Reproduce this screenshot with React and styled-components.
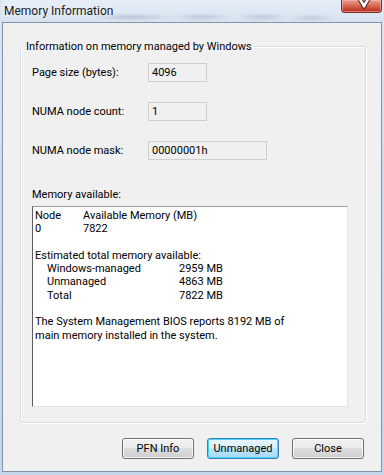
import React from 'react';
import styled, {createGlobalStyle} from 'styled-components';

const UI_FONT = 'Roboto, Lato, "Open Sans", sans-serif';

const GlobalStyle = createGlobalStyle`
  html, body {
    margin: 0;
    padding: 0;
    background: #ffffff;
  }
  body {
    font-family: ${UI_FONT};
    font-size: 11px;
    color: #000;
  }
`;

const Window = styled.div`
  width: 384px;
  height: 475px;
  box-sizing: border-box;
  display: flex;
  flex-direction: column;
  padding: 0 2px 3px 2px;
  background: linear-gradient(180deg, #dbe6f2 0%, #cddcec 40%, #c6d7ea 100%);
`;

const TitleBar = styled.div`
  height: 22px;
  display: flex;
  align-items: flex-start;
  justify-content: space-between;
  background:
    radial-gradient(ellipse 40px 4px at 130px 17px, rgba(120, 140, 165, 0.35), transparent),
    radial-gradient(ellipse 30px 4px at 200px 17px, rgba(120, 140, 165, 0.3), transparent),
    radial-gradient(ellipse 25px 4px at 260px 17px, rgba(120, 140, 165, 0.3), transparent),
    radial-gradient(ellipse 25px 4px at 310px 18px, rgba(120, 140, 165, 0.25), transparent),
    linear-gradient(180deg, #e6eef7 0%, #d6e2ef 100%);
`;

const Title = styled.span`
  font-size: 12px;
  line-height: 16px;
  margin: 3px 0 0 2px;
  color: #1a1a1a;
  text-shadow: 0 0 6px rgba(255, 255, 255, 0.9);
`;

const CloseButton = styled.div`
  width: 41px;
  height: 13px;
  box-sizing: border-box;
  border: 1px solid #7e2f27;
  border-top: 0;
  border-radius: 0 0 4px 4px;
  overflow: hidden;
  background: linear-gradient(180deg, #e8a08f 0%, #d96a58 45%, #c2402f 80%, #b73a2c 100%);
  box-shadow: inset 0 0 0 1px rgba(255, 200, 190, 0.45);
`;

const Client = styled.div`
  flex: 1;
  display: flex;
  flex-direction: column;
  border: 1px solid #8393a6;
  background: #f0f0f0;
  padding: 16px 0 0 17px;
`;

const GroupBox = styled.fieldset`
  width: 346px;
  height: 384px;
  box-sizing: border-box;
  margin: 0;
  padding: 0;
  min-width: 0;
  border: 1px solid #d5dfe5;
  border-radius: 3px;
  box-shadow: inset 1px 1px 0 #ffffff, 1px 1px 0 #ffffff;
`;

const Caption = styled.legend`
  padding: 0 1px;
  margin-left: 4px;
  line-height: 15px;
`;

const GroupBody = styled.div`
  padding: 9px 0 0 11px;
`;

const FieldGrid = styled.div`
  display: grid;
  grid-template-columns: 116px auto;
  row-gap: 20px;
  align-items: center;
  justify-items: start;
`;

const FieldLabel = styled.span`
  line-height: 15px;
`;

const ValueBox = styled.div`
  width: ${props => props.width}px;
  height: 19px;
  box-sizing: border-box;
  border: 1px solid #cfcfcf;
  background: #f0f0f0;
  padding: 0 0 0 3px;
  line-height: 17px;
`;

const SectionLabel = styled.div`
  margin-top: 27px;
  line-height: 15px;
`;

const TextArea = styled.div`
  width: 316px;
  height: 201px;
  margin-top: 4px;
  box-sizing: border-box;
  background: #ffffff;
  border-top: 1px solid #9c9c9c;
  border-left: 1px solid #5d5d5d;
  border-right: 1px solid #e3e3e3;
  border-bottom: 1px solid #e3e3e3;
  padding: 2px 0 0 2px;
  line-height: 13.3px;
`;

const Line = styled.div`
  display: flex;
  height: 13.3px;
  white-space: nowrap;
  padding-left: ${props => props.indent || 0}px;
`;

const Cell = styled.span`
  width: ${props => props.width}px;
  flex: none;
`;

const ButtonRow = styled.div`
  display: flex;
  justify-content: flex-end;
  gap: 13px;
  margin-top: 15px;
  padding-right: 17px;
`;

const Button = styled.div`
  width: 72px;
  height: 21px;
  box-sizing: border-box;
  display: flex;
  align-items: center;
  justify-content: center;
  border: 1px solid ${props => (props.isDefault ? '#3c7fb1' : '#707070')};
  border-radius: 3px;
  background: ${props =>
    props.isDefault
      ? 'linear-gradient(180deg, #eaf6fd 0%, #d9f0fc 45%, #bee6fd 50%, #a7d9f5 100%)'
      : 'linear-gradient(180deg, #f2f2f2 0%, #ebebeb 45%, #dddddd 50%, #cfcfcf 100%)'};
  box-shadow: ${props =>
    props.isDefault
      ? 'inset 0 0 0 1px #48d4fb'
      : 'inset 0 0 0 1px rgba(255, 255, 255, 0.75)'};
  line-height: 15px;
  color: #000;
`;

const ITEMS = [
  {label: 'Page size (bytes):', value: '4096', width: 59},
  {label: 'NUMA node count:', value: '1', width: 59},
  {label: 'NUMA node mask:', value: '00000001h', width: 119}
];

const TOTALS = [
  ['Windows-managed', '2959 MB'],
  ['Unmanaged', '4863 MB'],
  ['Total', '7822 MB']
];

const CloseGlyph = () => (
  <svg width="41" height="13" viewBox="0 0 41 13">
    <g strokeLinecap="square">
      <path d="M13 -9 L22 6 M31 -9 L22 6" stroke="#5a1d16" strokeWidth="4.5" />
      <path d="M13 -9 L22 6 M31 -9 L22 6" stroke="#ffffff" strokeWidth="2.6" />
    </g>
  </svg>
);

const App = () => (
  <Window>
    <GlobalStyle />
    <TitleBar>
      <Title>Memory Information</Title>
      <CloseButton>
        <CloseGlyph />
      </CloseButton>
    </TitleBar>
    <Client>
      <GroupBox>
        <Caption>Information on memory managed by Windows</Caption>
        <GroupBody>
          <FieldGrid>
            {ITEMS.map(item => (
              <React.Fragment key={item.label}>
                <FieldLabel>{item.label}</FieldLabel>
                <ValueBox width={item.width}>{item.value}</ValueBox>
              </React.Fragment>
            ))}
          </FieldGrid>
          <SectionLabel>Memory available:</SectionLabel>
          <TextArea>
            <Line>
              <Cell width={48}>Node</Cell>
              <span>Available Memory (MB)</span>
            </Line>
            <Line>
              <Cell width={48}>0</Cell>
              <span>7822</span>
            </Line>
            <Line />
            <Line>Estimated total memory available:</Line>
            {TOTALS.map(([name, amount]) => (
              <Line key={name} indent={12}>
                <Cell width={132}>{name}</Cell>
                <span>{amount}</span>
              </Line>
            ))}
            <Line />
            <Line>The System Management BIOS reports 8192 MB of</Line>
            <Line>main memory installed in the system.</Line>
          </TextArea>
        </GroupBody>
      </GroupBox>
      <ButtonRow>
        <Button>PFN Info</Button>
        <Button isDefault>Unmanaged</Button>
        <Button>Close</Button>
      </ButtonRow>
    </Client>
  </Window>
);

export default App;
